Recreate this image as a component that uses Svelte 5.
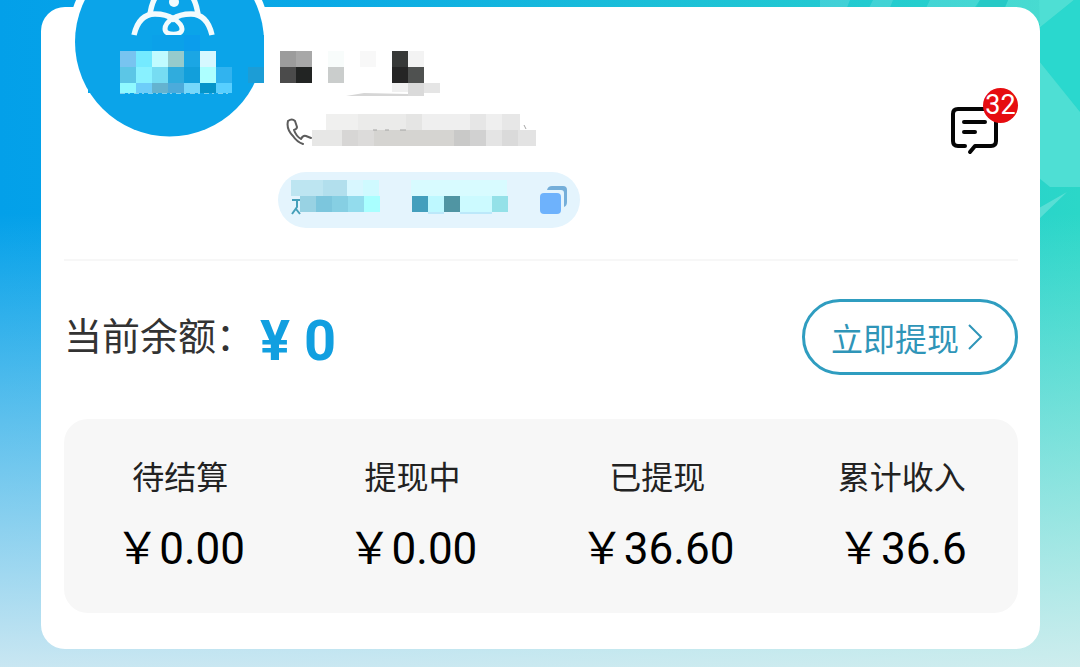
<script lang="ts">
  type Cell = [x: number, y: number, w: number, h: number, fill: string];

  const balance = '0';
  const unread = 32;
  // full-width yen sign
  const yen = '\uffe5';

  const stats = [
    { label: '待结算', value: '0.00' },
    { label: '提现中', value: '0.00' },
    { label: '已提现', value: '36.60' },
    { label: '累计收入', value: '36.6' },
  ];

  const avatarCells: Cell[] = [
    [216, 35, 48, 32, '#0ba4e9'],
    [152, 35, 32, 16, '#0ba1e9'],
    [184, 35, 16, 16, '#0b9dec'],
    [88, 83, 16, 10, '#0ba4e9'],
    [216, 67, 32, 26, '#0ba4e9'],
    [248, 67, 16, 16, '#1c9dd6'],
    [120, 51, 16, 16, '#78c4f0'],
    [136, 51, 16, 16, '#74eaff'],
    [152, 51, 16, 16, '#c0fbff'],
    [168, 51, 16, 16, '#96cbcc'],
    [184, 51, 16, 16, '#1ba6e4'],
    [200, 51, 16, 16, '#d6f8ff'],
    [120, 67, 16, 16, '#5cc6e6'],
    [136, 67, 16, 16, '#88f1ff'],
    [152, 67, 16, 16, '#76dcf2'],
    [168, 67, 16, 16, '#30acdd'],
    [184, 67, 16, 16, '#129fdb'],
    [200, 67, 16, 16, '#adffff'],
    [216, 67, 16, 16, '#31b3ef'],
    [120, 83, 16, 10, '#8ff9ff'],
    [136, 83, 16, 10, '#6dcdf9'],
    [152, 83, 16, 10, '#64b3d0'],
    [168, 83, 16, 10, '#4cabdb'],
    [184, 83, 16, 10, '#76d8fb'],
    [200, 83, 16, 10, '#0494c9'],
    [216, 83, 16, 10, '#58cfff'],
  ];

  const nameCells: Cell[] = [
    [2, 4, 16, 16, '#9c9c9c'],
    [18, 4, 16, 16, '#a8a8a8'],
    [2, 20, 16, 16, '#4b4b4b'],
    [18, 20, 16, 16, '#222423'],
    [50, 4, 16, 16, '#f8fcfb'],
    [50, 20, 16, 16, '#cacdcc'],
    [82, 4, 16, 16, '#f8f8f8'],
    [114, 4, 16, 16, '#373938'],
    [130, 4, 16, 16, '#f3f3f3'],
    [114, 20, 16, 16, '#252525'],
    [130, 20, 16, 16, '#4f5150'],
    [114, 36, 16, 9, '#f0f0f0'],
    [130, 36, 16, 13, '#dadada'],
    [146, 36, 16, 10, '#e5e5e5'],
  ];

  const phoneCells: Cell[] = [
    [14, 2, 32, 16, '#f0f0ef'],
    [46, 2, 48, 16, '#ebebea'],
    [94, 2, 16, 16, '#e5e5e4'],
    [110, 2, 48, 16, '#efefef'],
    [158, 2, 16, 16, '#e6e6e6'],
    [174, 2, 16, 16, '#efefef'],
    [190, 2, 18, 16, '#e7e7e7'],
    [0, 18, 30, 16, '#e7e7e6'],
    [30, 18, 16, 16, '#d7d6d5'],
    [46, 18, 16, 16, '#dcdbda'],
    [62, 18, 80, 16, '#d5d4d1'],
    [142, 18, 16, 16, '#c9c9c8'],
    [158, 18, 16, 16, '#d1d1d1'],
    [174, 18, 16, 16, '#e4e4e4'],
    [190, 18, 16, 16, '#dadada'],
    [206, 18, 18, 16, '#e3e3e3'],
  ];

  const codeCells: Cell[] = [
    [0, 0, 32, 16, '#bde5f1'],
    [32, 0, 24, 16, '#b2dfed'],
    [56, 0, 16, 16, '#d8f7ff'],
    [72, 0, 16, 16, '#cffaff'],
    [120, 0, 96, 16, '#d8fbff'],
    [9, 16, 16, 16, '#98d2e3'],
    [25, 16, 16, 16, '#7cc6dd'],
    [41, 16, 16, 16, '#86cfe3'],
    [57, 16, 16, 16, '#93dced'],
    [73, 16, 16, 16, '#a9ffff'],
    [121, 16, 16, 16, '#439fbd'],
    [137, 16, 16, 16, '#bef8ff'],
    [153, 16, 16, 16, '#5095a3'],
    [169, 16, 32, 16, '#ccfaff'],
    [201, 16, 16, 16, '#94e1e8'],
    [137, 32, 16, 2, '#bce8fa'],
    [169, 32, 32, 2, '#bce8fa'],
  ];
</script>

{#snippet mosaic(cells: Cell[])}
  {#each cells as [x, y, w, h, fill]}
    <rect {x} {y} width={w} height={h} {fill} shape-rendering="crispEdges" />
  {/each}
{/snippet}

<main class="page">
  <svg class="decor" viewBox="0 0 260 280" aria-hidden="true">
    <path d="M0 0h30l-8 20H0zM53 0h20l-8 20H43zM110 0h50l-14 20h-46zM188 0h54l-22 24-40-4z" fill="#fff" fill-opacity=".14" />
    <path d="M160 0h28l-9 20h-28z" fill="#27c9c6" />
    <path d="M219 0h35l-34 28z" fill="#4edfd4" />
    <path d="M254 0h6v112l-41-51V28z" fill="#2ad8ce" />
    <path d="M219 61l41 51v75h-30l-11-9z" fill="#4edfd4" />
    <path d="M219 208l28-16-28 27z" fill="#fff" fill-opacity=".22" />
  </svg>

  <section class="card">
    <svg class="avatar" viewBox="67 -60 204 204" role="img" aria-label="头像">
      <circle cx="169" cy="42" r="102" fill="#fff" />
      <circle cx="169.500" cy="42" r="94.500" fill="#0ba4e9" />
      <g fill="none" stroke="#f3fbfd" stroke-width="5.500">
        <path d="M134 35c3-13 10-21 21-21 8 0 14 2 18 5 4-3 10-5 18-5 11 0 18 8 21 21" />
        <path d="M173 18c-6 4-8 8-8 11 0 7 17 7 17 0 0-3-3-7-9-11z" stroke-width="5" />
        <path d="M150 14c2-12 5-18 12-25M198 14c-2-12-5-18-12-25" />
      </g>
      <circle cx="174" cy="2" r="5" fill="#f3fbfd" />
      <path d="M120 93h108" stroke="#7fd0ef" stroke-width="2" stroke-dasharray="5 3 2 4" />
      {@render mosaic(avatarCells)}
    </svg>

    <header class="profile">
      <div class="info">
        <svg class="name" viewBox="0 0 164 50" role="img" aria-label="昵称">
          {@render mosaic(nameCells)}
          <path d="M68 49l18-3 44 1v2z" fill="#d6d6d6" />
        </svg>

        <div class="phone">
          <svg width="26" height="28" viewBox="0 0 26 28" aria-hidden="true">
            <path d="M2 3q4-3 7 0l2 6q0 2-3 3 2 6 7 9 2-4 5-3l5 2M2 3q-2 8 5 15 4 6 10 8" fill="none" stroke="#5c5c5c" stroke-width="2" stroke-linecap="round" stroke-linejoin="round" />
          </svg>
          <svg width="226" height="34" viewBox="0 0 226 34" role="img" aria-label="手机号">
            {@render mosaic(phoneCells)}
            <path d="M61 18h4M73 18h4M88 18h6M212 13l2 4" stroke="#a5a5a5" stroke-width="1" />
          </svg>
        </div>

        <div class="code">
          <svg width="220" height="40" viewBox="0 0 220 40" role="img" aria-label="邀请码">
            {@render mosaic(codeCells)}
            <path d="M1 20h8M6 20v7l-5 7M5 29l4 5" fill="none" stroke="#459fb9" stroke-width="2" />
          </svg>
          <button class="copy" type="button" aria-label="复制">
            <svg width="28" height="28" viewBox="0 0 28 28" aria-hidden="true">
              <rect x="0" y="7" width="21" height="21" rx="4" fill="#6eb2fc" />
              <path d="M7 4q1-4 5-4h11q4 0 4 4v12q0 4-3 5V7q0-3-3-3z" fill="#75aed9" />
            </svg>
          </button>
        </div>
      </div>

      <button class="message" type="button" aria-label="消息">
        <svg width="50" height="50" viewBox="0 0 50 50" aria-hidden="true">
          <g fill="none" stroke="#050505" stroke-width="4" stroke-linecap="round" stroke-linejoin="round">
            <path d="M15 40H8q-5 0-5-5V8q0-5 5-5h33q5 0 5 5v27q0 5-5 5H25l-5 6" />
            <path d="M14 16h21M14 26h11" />
          </g>
        </svg>
        <span class="badge">{unread}</span>
      </button>
    </header>

    <div class="balance">
      <span class="caption">当前余额：</span>
      <strong>¥ {balance}</strong>
      <button class="withdraw" type="button">
        立即提现
        <svg width="16" height="28" viewBox="0 0 16 28" aria-hidden="true">
          <path d="M2 2l12 12L2 26" fill="none" stroke="currentColor" stroke-width="2" />
        </svg>
      </button>
    </div>

    <dl class="stats">
      {#each stats as stat}
        <div>
          <dt>{stat.label}</dt>
          <dd>{yen}{stat.value}</dd>
        </div>
      {/each}
    </dl>
  </section>
</main>

<style>
  :global(body) {
    font-family: Roboto, "Noto Sans CJK SC", sans-serif;
  }
  button {
    font: inherit;
    padding: 0;
    border: 0;
    background: none;
    cursor: pointer;
  }
  svg { display: block; }

  .page {
    position: relative;
    min-height: 100vh;
    box-sizing: border-box;
    padding: 7px 40px 17px 41px;
    overflow: hidden;
    background:
      linear-gradient(rgba(228, 240, 243, 0) 32%, rgba(228, 240, 243, .88) 100%),
      linear-gradient(90deg, #03a0e9 0%, #0aa9e6 30%, #1bbfd8 60%, #2bd7c8 100%);
  }
  .decor {
    position: absolute;
    top: 0;
    right: 0;
    width: 260px;
    height: 280px;
  }
  .card {
    position: relative;
    padding: 0 22px 36px 23px;
    border-radius: 24px;
    background: #fff;
  }
  .avatar {
    position: absolute;
    top: -67px;
    left: 26px;
    width: 204px;
    height: 204px;
  }

  .profile {
    display: flex;
    justify-content: space-between;
    align-items: flex-start;
    padding: 40px 0 31px 214px;
    border-bottom: 2px solid #f7f7f7;
  }
  .name {
    width: 164px;
    height: 50px;
  }
  .phone {
    display: flex;
    align-items: flex-end;
    margin: 15px 0 26px 8px;
  }
  .code {
    display: flex;
    align-items: center;
    gap: 29px;
    height: 56px;
    padding: 0 12px 0 13px;
    border-radius: 28px;
    background: #e4f4fd;
  }
  .message {
    position: relative;
    margin: 59px 18px 0 0;
  }
  .badge {
    position: absolute;
    top: -18px;
    right: -18px;
    width: 35px;
    height: 35px;
    border-radius: 50%;
    background: #e60d10;
    color: #fff;
    font-size: 27px;
    line-height: 35px;
    text-align: center;
  }

  .balance {
    display: flex;
    align-items: center;
    padding: 38px 0 44px;
  }
  .caption {
    color: #333;
    font-size: 38px;
    line-height: 56px;
  }
  .balance strong {
    margin-left: 6px;
    padding-top: 8px;
    color: #119fe0;
    font-size: 56px;
    line-height: 64px;
  }
  .withdraw {
    display: flex;
    align-items: center;
    gap: 8px;
    height: 76px;
    margin-left: auto;
    padding: 0 32px 0 26px;
    border: 3px solid #2f9dc0;
    border-radius: 38px;
    color: #2f95b8;
    font-size: 32px;
  }

  .stats {
    display: flex;
    justify-content: space-around;
    margin: 0;
    padding: 36px 0 32px;
    border-radius: 24px;
    background: #f7f7f7;
    text-align: center;
  }
  dt {
    color: #222;
    font-size: 32px;
    line-height: 46px;
  }
  dd {
    margin: 16px 0 0;
    color: #000;
    font-size: 44px;
    line-height: 64px;
  }
</style>
